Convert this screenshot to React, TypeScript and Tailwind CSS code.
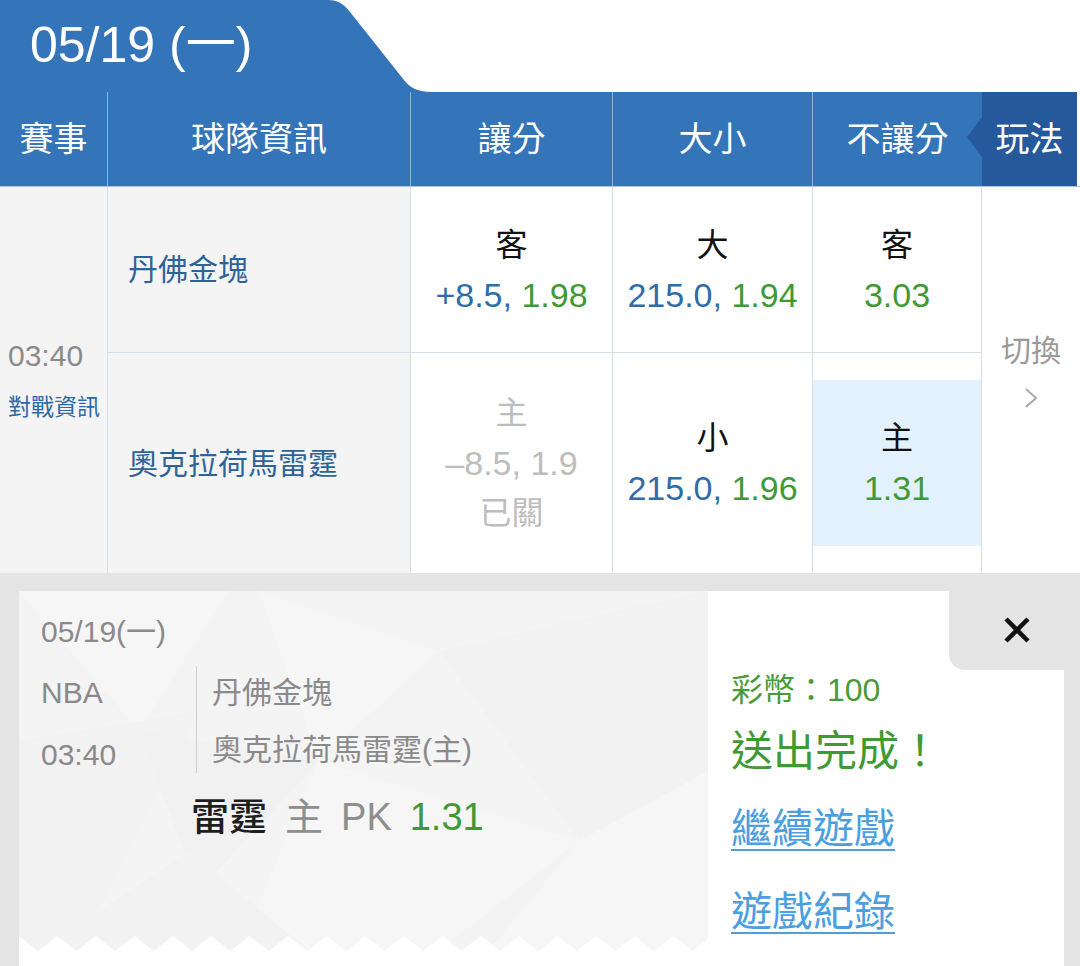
import React from "react";

const FONT = "font-['Liberation_Sans','Noto_Sans_CJK_TC',sans-serif]";

interface OddsProps {
  label: string;
  line?: string;
  odds: string;
}

// single odds cell content: label on top, line + odds below
function Odds({ label, line, odds }: OddsProps) {
  return (
    <div className="flex flex-col items-center leading-[50px]">
      <span className="text-[32px] text-[#111]">{label}</span>
      <span className="text-[34px]">
        {line && <span className="text-[#2f6ca8]">{line}, </span>}
        <span className="text-[#3f9a36]">{odds}</span>
      </span>
    </div>
  );
}

function CardPattern() {
  return (
    <svg
      className="absolute inset-0 h-full w-full"
      viewBox="0 0 689 360"
      preserveAspectRatio="none"
    >
      <rect width="689" height="360" fill="#f4f4f4" />
      <polygon points="0,0 210,0 120,140" fill="#f6f6f6" />
      <polygon points="0,150 180,120 60,360 0,360" fill="#f2f2f2" />
      <polygon points="240,0 420,60 300,170" fill="#f6f6f6" />
      <polygon points="420,60 689,0 689,180 560,250" fill="#f2f2f2" />
      <polygon points="300,170 560,250 420,360 220,360" fill="#f6f6f6" />
      <polygon points="120,140 300,170 180,300" fill="#f1f1f1" />
      <polygon points="560,250 689,180 689,360 470,360" fill="#f6f6f6" />
      <polygon points="20,360 170,260 290,360" fill="#f2f2f2" />
    </svg>
  );
}

function Zigzag() {
  return (
    <svg className="absolute bottom-0 left-0 h-[15px] w-full">
      <defs>
        <pattern
          id="zig"
          width="38.5"
          height="15"
          patternUnits="userSpaceOnUse"
          patternTransform="translate(19 0)"
        >
          <polygon points="0,15 19.25,0 38.5,15" fill="#ffffff" />
        </pattern>
      </defs>
      <rect width="100%" height="15" fill="url(#zig)" />
    </svg>
  );
}

export default function App() {
  const line = "border-[#d7dee6]";

  return (
    <div className={`h-[966px] w-[1080px] overflow-hidden bg-white ${FONT}`}>
      {/* date tab */}
      <div className="flex h-[92px]">
        <div className="flex w-[324px] items-center bg-[#3474b8] pb-[3px] pl-[30px] text-[50px] leading-none text-white">
          05/19 (一)
        </div>
        <svg width="110" height="92" viewBox="0 0 110 92" className="block">
          <path
            d="M0 0 H4 C14 0 20 4 26 12 L80 80 C86 88 94 92 108 92 H0 Z"
            fill="#3474b8"
          />
        </svg>
      </div>

      {/* header */}
      <div className="grid h-[94px] grid-cols-[108px_303px_202px_200px_169px_98px] bg-[#3474b8] text-[34px] text-white">
        <div className="flex items-center justify-center border-r border-[#8fb4dd]">賽事</div>
        <div className="flex items-center justify-center border-r border-[#8fb4dd]">球隊資訊</div>
        <div className="flex items-center justify-center border-r border-[#8fb4dd]">讓分</div>
        <div className="flex items-center justify-center border-r border-[#8fb4dd]">大小</div>
        <div className="flex items-center justify-center">不讓分</div>
        <div className="flex bg-white pr-[3px]">
          <div className="relative flex flex-1 items-center justify-center bg-[#26599b]">
            <svg
              className="absolute left-[-15px] top-[25px]"
              width="15"
              height="40"
              viewBox="0 0 15 40"
            >
              <polygon points="15,0 0,20 15,40" fill="#26599b" />
            </svg>
            玩法
          </div>
        </div>
      </div>

      {/* body */}
      <div className="grid grid-cols-[108px_303px_202px_200px_169px_98px] grid-rows-[166px_220px] border-t border-[#a9c6e6]">
        <div className={`row-span-2 flex flex-col items-start justify-center gap-[18px] border-r bg-[#f4f4f4] pl-[8px] ${line}`}>
          <span className="text-[30px] leading-[36px] text-[#8a8a8a]">03:40</span>
          <span className="text-[23px] leading-[30px] text-[#2d6aa8]">對戰資訊</span>
        </div>

        <div className={`flex items-center border-b border-r bg-[#f4f4f4] pl-[20px] text-[30px] text-[#2e6399] ${line}`}>
          丹佛金塊
        </div>
        <div className={`flex items-center justify-center border-b border-r ${line}`}>
          <Odds label="客" line="+8.5" odds="1.98" />
        </div>
        <div className={`flex items-center justify-center border-b border-r ${line}`}>
          <Odds label="大" line="215.0" odds="1.94" />
        </div>
        <div className={`flex items-center justify-center border-b border-r ${line}`}>
          <Odds label="客" odds="3.03" />
        </div>

        <div className="row-span-2 col-start-6 row-start-1 flex flex-col items-center justify-center gap-[16px] pb-[20px]">
          <span className="text-[30px] leading-[40px] text-[#9a9a9a]">切換</span>
          <svg width="14" height="22" viewBox="0 0 14 22">
            <polyline points="2,2 12,11 2,20" fill="none" stroke="#aaaaaa" strokeWidth="2" />
          </svg>
        </div>

        <div className={`flex items-center border-r bg-[#f4f4f4] pl-[20px] text-[30px] text-[#2e6399] ${line}`}>
          奧克拉荷馬雷霆
        </div>
        <div className={`flex flex-col items-center justify-center border-r leading-[50px] text-[#bdbdbd] ${line}`}>
          <span className="text-[32px]">主</span>
          <span className="text-[34px]">–8.5, 1.9</span>
          <span className="text-[32px]">已關</span>
        </div>
        <div className={`flex items-center justify-center border-r ${line}`}>
          <Odds label="小" line="215.0" odds="1.96" />
        </div>
        <div className={`flex border-r py-[27px] ${line}`}>
          <div className="flex flex-1 items-center justify-center bg-[#e2f1fc]">
            <Odds label="主" odds="1.31" />
          </div>
        </div>
      </div>

      {/* bet result */}
      <div className="h-[394px] bg-[#e4e4e4] pl-[19px] pr-[16px] pt-[18px]">
        <div className="flex h-full bg-white">
          <div className="flex w-[689px] flex-col">
            <div className="relative flex-1">
              <CardPattern />
              <Zigzag />
              <div className="relative pl-[22px] pt-[21px] text-[#8a8a8a]">
                <div className="text-[30px] leading-[40px]">05/19(一)</div>
                <div className="mt-[14px] flex h-[107px]">
                  <div className="flex w-[155px] flex-col gap-[22px] pt-[7px] text-[30px] leading-[40px]">
                    <span>NBA</span>
                    <span>03:40</span>
                  </div>
                  <div className="flex flex-col gap-[17px] border-l border-[#cfcfcf] pl-[15px] pt-[7px] text-[30px] leading-[40px]">
                    <span>丹佛金塊</span>
                    <span>奧克拉荷馬雷霆(主)</span>
                  </div>
                </div>
                <div className="ml-[150px] mt-[19px] flex items-baseline gap-[18px] text-[38px] leading-[50px]">
                  <span className="font-medium text-[#1e1e1e]">雷霆</span>
                  <span className="text-[#8e8e8e]">主</span>
                  <span className="text-[#8e8e8e]">PK</span>
                  <span className="text-[#3f9a36]">1.31</span>
                </div>
              </div>
            </div>
            <div className="h-[16px] bg-white" />
          </div>

          <div className="flex flex-1 flex-col">
            <div className="flex justify-end">
              <div className="flex h-[79px] w-[115px] items-center justify-center rounded-bl-[16px] bg-[#e4e4e4] pb-[2px] pl-[20px]">
                <svg width="30" height="30" viewBox="0 0 30 30">
                  <path d="M4 4 L26 26 M26 4 L4 26" stroke="#111111" strokeWidth="4.5" />
                </svg>
              </div>
            </div>
            <div className="flex flex-col items-start pl-[23px]">
              <span className="text-[32px] leading-[40px] text-[#4a9a3a]">彩幣：100</span>
              <span className="mt-[14px] text-[42px] leading-[56px] text-[#3f9a36]">送出完成！</span>
              <span className="mt-[22px] text-[41px] leading-[54px] text-[#4b9fe1] underline decoration-[2px] underline-offset-[6px]">
                繼續遊戲
              </span>
              <span className="mt-[29px] text-[41px] leading-[54px] text-[#4b9fe1] underline decoration-[2px] underline-offset-[6px]">
                遊戲紀錄
              </span>
            </div>
          </div>
        </div>
      </div>
    </div>
  );
}
